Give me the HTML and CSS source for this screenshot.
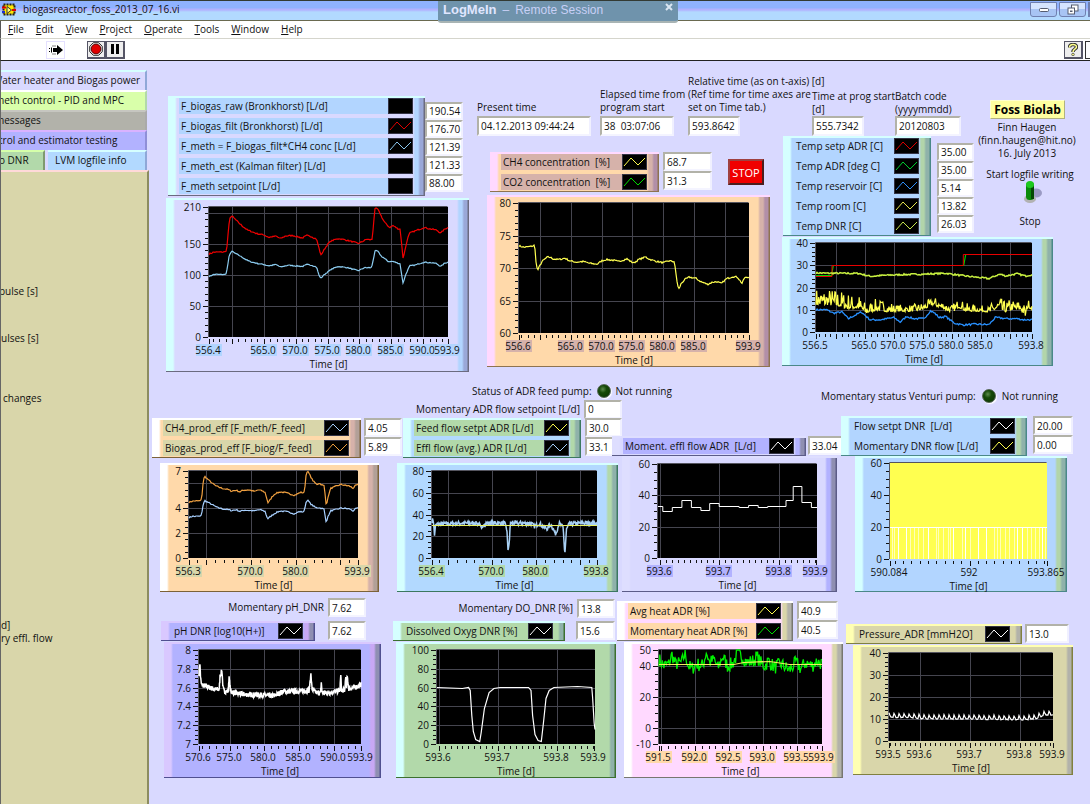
FILE: index.html
```html
<!DOCTYPE html>
<html lang="en">
<head>
<meta charset="utf-8">
<title>biogasreactor_foss_2013_07_16.vi</title>
<link rel="stylesheet" href="styles.css">
</head>
<body>
<header class="titlebar">
  <svg class="app-icon" viewBox="0 0 14 14" aria-hidden="true"><rect x="1.500" y="1.500" width="11" height="10" fill="#ffe800" stroke="#222" stroke-width="2" stroke-dasharray="2 1"/><path d="M5 3.500l4.500 3.500-4.500 3.500z" fill="#ffff80" stroke="#333"/><path d="M0 4.500h4" stroke="#e00000" stroke-width="2"/><path d="M0 9h3" stroke="#2030d0" stroke-width="2"/><path d="M10 7h4" stroke="#e00000" stroke-width="2"/></svg>
  <span class="title">biogasreactor_foss_2013_07_16.vi</span>
  <div class="win-buttons">
    <button class="win-btn" aria-label="Minimize"><svg width="12" height="8" viewBox="0 0 12 8"><rect x="1.500" y="2.500" width="9" height="3" rx="1" fill="#fff" stroke="#555c70"/></svg></button>
    <button class="win-btn" aria-label="Restore"><svg width="12" height="11" viewBox="0 0 12 11"><rect x="4.500" y="1" width="6.500" height="6" fill="#fff" stroke="#555c70"/><rect x="1" y="4" width="6.500" height="6" fill="#fff" stroke="#555c70"/><rect x="3" y="6.500" width="2.500" height="1.500" fill="#555c70"/></svg></button>
    <button class="win-btn win-close" aria-label="Close"></button>
  </div>
  <div class="remote"><b>LogMeIn</b><span>–</span><span>Remote Session</span><button class="remote-close" aria-label="Close session bar"><svg width="8" height="8" viewBox="0 0 8 8"><path d="M1 1l6 6M7 1l-6 6" stroke="#d9e6f2" stroke-width="2"/></svg></button></div>
</header>
<nav class="menubar">
  <button><u>F</u>ile</button><button><u>E</u>dit</button><button><u>V</u>iew</button><button><u>P</u>roject</button><button><u>O</u>perate</button><button><u>T</u>ools</button><button><u>W</u>indow</button><button><u>H</u>elp</button>
</nav>
<div class="toolbar">
  <button class="tool tool-run" aria-label="Run"><svg width="14" height="12" viewBox="0 0 14 12"><path d="M4 4h4V1l6 5-6 5V8H4z" fill="#000"/><path d="M.5 4v1M.5 7v1M2.500 3.500v5" stroke="#000"/><path d="M3.500 2h3M3.500 10h3" stroke="#000" stroke-dasharray="1 1"/></svg></button>
  <button class="tool" aria-label="Abort"><svg width="14" height="14" viewBox="0 0 14 14"><path d="M4.300.7h5.400l3.600 3.600v5.400l-3.600 3.600H4.300L.7 9.700V4.300z" fill="#ddd" stroke="#333"/><circle cx="7" cy="7" r="4.800" fill="#e00000" stroke="#600"/></svg></button>
  <button class="tool" aria-label="Pause"><svg width="10" height="10" viewBox="0 0 10 10"><path d="M1 0h3v10H1zM6 0h3v10H6z" fill="#000"/></svg></button>
  <button class="tool tool-help" aria-label="Context help"><svg width="10" height="13" viewBox="0 0 10 13"><path d="M1.500 4.500C1.500 .5 8.500 .5 8.500 4 8.500 6 5 6 5 9" fill="none" stroke="#333" stroke-width="3.500"/><path d="M1.500 4.500C1.500 .5 8.500 .5 8.500 4 8.500 6 5 6 5 9" fill="none" stroke="#ffff8c" stroke-width="1.500"/><circle cx="5" cy="11.500" r="1.300" fill="#ffff8c" stroke="#333" stroke-width=".7"/></svg></button>
  <span class="vi-edge"></span>
</div>
<div class="workspace">
  <aside class="sidebar">
    <button class="tab tab-lavender"><span class="cut-8">Water heater and Biogas power</span></button>
    <button class="tab tab-lime"><span class="cut-6">meth control - PID and MPC</span></button>
    <button class="tab tab-gray"><span class="cut-6">messages</span></button>
    <button class="tab tab-violet"><span class="cut-2">trol and estimator testing</span></button>
    <div class="tab-pair">
      <button class="tab tab-green"><span class="cut-2">o DNR</span></button>
      <button class="tab tab-blue">LVM logfile info</button>
    </div>
    <div class="tab-page">
      <p class="note note-a"><span class="cut-2">pulse [s]</span></p>
      <p class="note note-b">ulses [s]</p>
      <p class="note note-c">changes</p>
      <p class="note note-d">d]</p>
      <p class="note note-e">ry effl. flow</p>
    </div>
  </aside>
  <main class="panel">
    <section class="top-grid">
      <div class="gas">
        <div class="readout">
          <ul class="legend sky legend-gas">
            <li>F_biogas_raw (Bronkhorst) [L/d]<i class="swatch"></i></li>
            <li>F_biogas_filt (Bronkhorst) [L/d]<i class="swatch" data-color="#e00000"></i></li>
            <li>F_meth = F_biogas_filt*CH4 conc [L/d]<i class="swatch" data-color="#8cc8f0"></i></li>
            <li>F_meth_est (Kalman filter) [L/d]<i class="swatch"></i></li>
            <li>F_meth setpoint [L/d]<i class="swatch"></i></li>
          </ul>
          <div class="values values-gas">
            <input readonly aria-label="F_biogas_raw" value="190.54"><input readonly aria-label="F_biogas_filt" value="176.70"><input readonly aria-label="F_meth" value="121.39"><input readonly aria-label="F_meth_est" value="121.33"><input readonly aria-label="F_meth setpoint" value="88.00">
          </div>
        </div>
        <div class="chart sky h-174" data-chart="gas"></div>
      </div>
      <div class="clock-strip">
        <label>Present time<input readonly class="w-114" value="04.12.2013 09:44:24"></label>
        <label>Elapsed time from<br>program start<input readonly class="w-74" value="38  03:07:06"></label>
        <label>Relative time (as on t-axis) [d]<br>(Ref time for time axes are<br>set on Time tab.)<input readonly class="w-52" value="593.8642"></label>
        <label class="tight">Time at prog start<br>[d]<input readonly class="w-52" value="555.7342"></label>
        <label class="tight">Batch code<br>(yyyymmdd)<input readonly class="w-66" value="20120803"></label>
      </div>
      <div class="about">
        <strong>Foss Biolab</strong>
        <p>Finn Haugen<br>(finn.haugen@hit.no)<br>16. July 2013</p>
        <button class="toggle" aria-pressed="true">Start logfile writing
          <svg width="24" height="24" viewBox="0 0 24 24"><ellipse cx="18" cy="13" rx="6" ry="4.500" fill="#9a9ac4"/><ellipse cx="12" cy="19" rx="6" ry="4" fill="#b2b2b2"/><rect x="8" y="2" width="8" height="18" rx="3.500" fill="#0a8a0a"/><rect x="13" y="4" width="3" height="15" fill="#034a03"/><ellipse cx="12" cy="4.500" rx="4" ry="3.500" fill="#1dc81d"/></svg>
          <span>Stop</span></button>
      </div>
      <div class="conc">
        <div class="readout readout-conc">
          <ul class="legend rose legend-conc">
            <li>CH4 concentration&nbsp; [%]<i class="swatch" data-color="#ffff50"></i></li>
            <li>CO2 concentration&nbsp; [%]<i class="swatch" data-color="#00e000"></i></li>
          </ul>
          <div class="values values-conc"><input readonly aria-label="CH4 concentration" value="68.7"><input readonly aria-label="CO2 concentration" value="31.3"></div>
          <button class="stop">STOP</button>
        </div>
        <div class="chart rose h-172" data-chart="conc"></div>
      </div>
      <div class="readout readout-temp">
        <ul class="legend aqua legend-temp">
          <li>Temp setp ADR [C]<i class="swatch" data-color="#e00000"></i></li>
          <li>Temp ADR [deg C]<i class="swatch" data-color="#00d030"></i></li>
          <li>Temp reservoir [C]<i class="swatch" data-color="#3090ff"></i></li>
          <li>Temp room [C]<i class="swatch" data-color="#e8e850"></i></li>
          <li>Temp DNR [C]<i class="swatch" data-color="#c8e850"></i></li>
        </ul>
        <div class="values values-temp">
          <input readonly aria-label="Temp setp ADR" value="35.00"><input readonly aria-label="Temp ADR" value="35.00"><input readonly aria-label="Temp reservoir" value="5.14"><input readonly aria-label="Temp room" value="13.82"><input readonly aria-label="Temp DNR" value="26.03">
        </div>
      </div>
      <div class="chart aqua h-129 chart-temp" data-chart="temp"></div>
    </section>

    <section class="quad quad-flow">
      <div class="cell cell-eff">
        <div class="readout">
          <ul class="legend peach legend-eff">
            <li>CH4_prod_eff [F_meth/F_feed]<i class="swatch" data-color="#a8d0ff"></i></li>
            <li>Biogas_prod_eff [F_biog/F_feed]<i class="swatch" data-color="#f0a040"></i></li>
          </ul>
          <div class="values values-eff"><input readonly aria-label="CH4_prod_eff" value="4.05"><input readonly aria-label="Biogas_prod_eff" value="5.89"></div>
        </div>
        <div class="chart peach h-129" data-chart="eff"></div>
      </div>
      <div class="cell cell-feed">
        <p class="status">Status of ADR feed pump:<i class="led"></i>Not running</p>
        <label class="single single-feed">Momentary ADR flow setpoint [L/d]<input readonly value="0"></label>
        <div class="readout">
          <ul class="legend mint legend-feed">
            <li>Feed flow setpt ADR [L/d]<i class="swatch" data-color="#ffff50"></i></li>
            <li>Effl flow (avg.) ADR [L/d]<i class="swatch" data-color="#a8d0ff"></i></li>
          </ul>
          <div class="values values-feed"><input readonly aria-label="Feed flow setpoint" value="30.0"><input readonly aria-label="Effluent flow" value="33.1"></div>
        </div>
        <div class="chart mint h-129" data-chart="feed"></div>
      </div>
      <div class="cell cell-effl">
        <div class="readout">
          <ul class="legend lilac legend-effl"><li>Moment. effl flow ADR&nbsp; [L/d]<i class="swatch" data-color="#ffffff"></i></li></ul>
          <div class="values values-effl"><input readonly aria-label="Momentary effluent flow" value="33.04"></div>
        </div>
        <div class="chart lilac h-136" data-chart="effl"></div>
      </div>
      <div class="cell cell-dnr">
        <p class="status status-dnr">Momentary status Venturi pump:<i class="led"></i>Not running</p>
        <div class="readout">
          <ul class="legend aqua legend-dnr">
            <li>Flow setpt DNR&nbsp; [L/d]<i class="swatch" data-color="#ffffff"></i></li>
            <li>Momentary DNR flow [L/d]<i class="swatch" data-color="#ffff50"></i></li>
          </ul>
          <div class="values values-dnr"><input readonly aria-label="Flow setpoint DNR" value="20.00"><input readonly aria-label="Momentary DNR flow" value="0.00"></div>
        </div>
        <div class="chart aqua h-136" data-chart="dnr"></div>
      </div>
    </section>

    <section class="quad quad-state">
      <div class="cell cell-ph">
        <label class="single single-ph">Momentary pH_DNR<input readonly value="7.62"></label>
        <div class="readout">
          <ul class="legend violet legend-ph"><li>pH DNR [log10(H+)]<i class="swatch" data-color="#ffffff"></i></li></ul>
          <div class="values values-ph"><input readonly aria-label="pH DNR" value="7.62"></div>
        </div>
        <div class="chart violet h-136" data-chart="ph"></div>
      </div>
      <div class="cell cell-do">
        <label class="single single-do">Momentary DO_DNR [%]<input readonly value="13.8"></label>
        <div class="readout">
          <ul class="legend green legend-do"><li>Dissolved Oxyg DNR [%]<i class="swatch" data-color="#ffffff"></i></li></ul>
          <div class="values values-do"><input readonly aria-label="Dissolved oxygen DNR" value="15.6"></div>
        </div>
        <div class="chart green h-136" data-chart="oxy"></div>
      </div>
      <div class="cell cell-heat">
        <div class="readout">
          <ul class="legend pink legend-heat">
            <li>Avg heat ADR [%]<i class="swatch" data-color="#ffff50"></i></li>
            <li>Momentary heat ADR [%]<i class="swatch" data-color="#00e000"></i></li>
          </ul>
          <div class="values values-heat"><input readonly aria-label="Average heat" value="40.9"><input readonly aria-label="Momentary heat" value="40.5"></div>
        </div>
        <div class="chart pink h-136" data-chart="heat"></div>
      </div>
      <div class="cell cell-press">
        <div class="readout">
          <ul class="legend olive legend-press"><li>Pressure_ADR [mmH2O]<i class="swatch" data-color="#ffffff"></i></li></ul>
          <div class="values values-press"><input readonly aria-label="Pressure ADR" value="13.0"></div>
        </div>
        <div class="chart olive h-130" data-chart="press"></div>
      </div>
    </section>
  </main>
</div>
<script src="charts.js"></script>
</body>
</html>
```
FILE: styles.css
```css
* { box-sizing: border-box; }
body {
  margin: 0;
  min-height: 100vh;
  display: flex;
  flex-direction: column;
  background: #d9d9ff;
  color: #111;
  font: 10px/13px "Open Sans", "Noto Sans", sans-serif;
  overflow-x: hidden;
}
button, input { font: inherit; color: inherit; }
button { border: 0; padding: 0; background: none; }
p, ul { margin: 0; padding: 0; }
ul { list-style: none; }

/* window chrome */
.titlebar {
  position: relative;
  display: flex;
  align-items: center;
  height: 21px;
  padding: 0 0 2px 2px;
  border-top: 1px solid #333a33;
  border-bottom: 1px solid #6a6a50;
  background: linear-gradient(#8fb2ff 0 7px, #b2b2ff 8px 9px, #b2d9ff 11px);
}
.app-icon { width: 14px; height: 14px; }
.title { margin-left: 7px; font-size: 10px; }
.win-buttons { display: flex; gap: 2px; margin-left: auto; align-self: flex-start; }
.win-btn {
  display: flex; align-items: center; justify-content: center;
  width: 27px; height: 15px; margin-top: 1px;
  border: 1px solid #7080b0; border-radius: 0 0 3px 3px;
  background: linear-gradient(#d5e4ff 0 50%, #a8c4f4 50%);
}
.win-close { width: 2px; background: #a03030; border-radius: 0; }
.remote {
  position: absolute; left: 50%; top: 0; transform: translateX(-107px);
  display: flex; align-items: center; gap: 6px;
  width: 240px; height: 22px; padding: 0 5px 3px;
  border-radius: 0 0 3px 3px; border-bottom: 2px solid #a8b4b4;
  background: #6f93ac; color: #c8d0f6;
  font: 12px/14px "Liberation Sans", sans-serif;
}
.remote b { font-size: 13px; color: #e0e6ff; }
.remote-close { display: flex; margin-left: auto; align-self: flex-start; padding-top: 2px; }
.menubar { display: flex; gap: 12px; height: 18px; padding: 0 0 1px 7px; background: #fff; border-bottom: 1px solid #d5d5cc; border-left: 1px solid #555; }
.toolbar { display: flex; align-items: center; height: 22px; padding-left: 45px; background: #fff; border-bottom: 1px solid #222; border-left: 1px solid #555; }
.tool { display: flex; align-items: center; justify-content: center; width: 19px; height: 18px; border: 1px solid #556; border-right-width: 2px; border-bottom-width: 2px; background: #eee; }
.tool-run { margin-right: 22px; border: 1px solid #e4e0ff; background: #fff; }
.tool-help { margin-left: auto; }
.vi-edge { width: 5px; height: 18px; margin-left: 2px; border: 1px solid #333; border-right: 0; }

/* clipped tab control */
.workspace { display: flex; flex: 1; }
.sidebar { display: flex; flex-direction: column; flex: 0 0 149px; padding-top: 9px; overflow: hidden; border-left: 1px solid #666; white-space: nowrap; }
.tab { height: 20px; margin-right: 2px; padding-bottom: 1px; text-align: left; overflow: hidden; border-top: 2px solid #d5ffff; border-right: 2px solid #8fa8d8; }
.tab span { display: block; }
.cut-8 { margin-left: -8px; }
.cut-6 { margin-left: -6px; }
.cut-2 { margin-left: -2px; }
.tab-lavender { background: #d9d9ff; }
.tab-lime { background: #d9ffaa; border-color: #fff #b2d9aa #fff #fff; }
.tab-gray { background: #b2b2aa; border-color: #c6c6c0 #aaa #aaa #aaa; }
.tab-violet { background: #b2b2ff; border-color: #d9b2ff #8f8fd8 #8f8fd8 #8f8fd8; }
.tab-pair { display: flex; gap: 3px; height: 20px; }
.tab-pair .tab { flex: 0 0 44px; margin-right: 0; }
.tab-green { background: #b2d9aa; border-color: #d5ffaa #7f9a70 #b2d9aa #b2d9aa; }
.tab-pair .tab-blue { flex: 0 0 99px; padding-left: 7px; background: #b2d9ff; }
.tab-page { flex: 1; padding-top: 113px; background: #d9d6aa; border-top: 2px solid #ffd9d9; border-right: 2px solid #8c8c60; }
.note { height: 13px; }
.note-b { margin-top: 34px; }
.note-c { margin: 47px 0 0 2px; }
.note-d { margin-top: 214px; }

/* front panel */
.panel { flex: 1; min-width: 0; white-space: nowrap; }
.top-grid {
  display: grid;
  grid-template-columns: 311fr 305fr 195fr 113fr;
  grid-template-rows: 75px 101px 136px;
  padding-left: 17px;
}
.gas { grid-row: 1 / 4; padding: 35px 8px 0 0; min-width: 0; }
.clock-strip { grid-column: 2 / 4; display: grid; grid-template-columns: 123fr 88fr 124fr 83fr 82fr; align-items: end; min-width: 0; }
.clock-strip label { min-width: 0; }
.clock-strip input { display: block; height: 20px; margin-top: 2px; white-space: pre; }
.clock-strip .tight input { margin-top: 0; }
.w-114 { width: 114px; }
.w-74 { width: 74px; }
.w-52 { width: 52px; }
.w-66 { width: 66px; }
.about { grid-column: 4; grid-row: 1 / 3; display: flex; flex-direction: column; align-items: center; padding: 39px 13px 0 0; min-width: 0; text-align: center; }
.about strong { padding: 0 0 0 1px; width: 75px; font-size: 12px; line-height: 17px; color: #000; background: #ffffa0; border: 1px solid #ffffd0; border-right-color: #b2b280; border-bottom-color: #b2b280; }
.about p { margin-top: 2px; }
.toggle { display: flex; flex-direction: column; align-items: center; margin: 8px 0 0 6px; }
.toggle svg { margin-top: -1px; }
.toggle span { margin-top: 11px; }
.conc { grid-column: 2; grid-row: 2 / 4; padding: 16px 12px 0 10px; min-width: 0; }
.chart-temp { grid-column: 3 / 5; margin-right: 37px; }
.stop { width: 36px; height: 26px; margin: 7px 0 0 16px; font-size: 11px; color: #fff; background: #f00000; border: 2px outset #a04040; }

/* numeric indicators */
input {
  width: 100%; min-width: 0; height: 19px; padding: 0 0 0 2px;
  background: #fff; outline: 0; border-radius: 0;
  border: 2px solid #b2b2a8; border-right: 2px solid #f0f0ff; border-bottom: 2px solid #f4f4ff;
}
.readout { display: flex; align-items: flex-start; }
.values { display: flex; flex-direction: column; flex: none; }
.values-gas { width: 38px; padding-top: 6px; }
.values-gas input { height: 18px; }
.values-conc { width: 49px; margin-left: 4px; }
.values-temp { width: 37px; margin-left: 6px; padding-top: 7px; }
.values-temp input { height: 18px; }
.values-eff, .values-effl, .values-ph { width: 38px; }
.values-eff { margin-left: 3px; }
.values-feed { width: 37px; margin-left: 4px; }
.values-effl { margin-left: 2px; }
.values-dnr { width: 40px; margin-left: 6px; }
.values-ph { margin-left: 13px; }
.values-do { width: 39px; margin-left: 11px; }
.values-heat { width: 41px; margin-left: 4px; }
.values-press { width: 44px; margin-left: 3px; }

/* bevelled plates shared by legends and charts */
.legend, .chart {
  border-top: 2px solid var(--lite);
  border-bottom: 1px solid var(--dark);
  background: linear-gradient(to right, var(--lite) 7px, var(--base) 9px, var(--base) calc(100% - 12px), var(--mid) calc(100% - 10px), var(--mid) calc(100% - 7px), var(--deep) calc(100% - 5px), var(--deep) calc(100% - 2px), var(--dark) calc(100% - 1px));
}
.sky { --lite: #d5ffff; --base: #d9d9ff; --mid: #b2d5ff; --deep: #9aa8d8; --dark: #6b6b80; --chip: #b2d5ff; }
.rose { --lite: #ffd9ff; --base: #ffd9aa; --mid: #d6b2aa; --deep: #b28fa8; --dark: #8e7350; --chip: #d6b2aa; }
.aqua { --lite: #d5ffff; --base: #b2d5ff; --mid: #b2d5aa; --deep: #8fb2aa; --dark: #4a8888; --chip: #b2d5ff; }
.peach { --lite: #ffffff; --base: #ffd9aa; --mid: #d6b2aa; --deep: #b2a098; --dark: #7c6238; --chip: #d9d6aa; }
.mint { --lite: #d5ffff; --base: #b2d9ff; --mid: #b2d9aa; --deep: #8fb2aa; --dark: #3c7860; --chip: #b2d9aa; }
.lilac { --lite: #dedeff; --base: #d9d9ff; --mid: #b2b2ff; --deep: #8f8fb2; --dark: #5c5c88; --chip: #b2b2ff; }
.violet { --lite: #d9c8ff; --base: #b2b2ff; --mid: #c8a8f4; --deep: #8f8fb2; --dark: #505090; --chip: #b2b2ff; }
.green { --lite: #d5ffff; --base: #b2d9aa; --mid: #b2d9aa; --deep: #8fb2aa; --dark: #3c7030; --chip: #b2d9aa; }
.pink { --lite: #ffffff; --base: #ffd9ff; --mid: #d9d6aa; --deep: #b2b2aa; --dark: #777770; --chip: #ffd9aa; }
.olive { --lite: #ffffb2; --base: #d9d6aa; --mid: #d9d6aa; --deep: #b2b2aa; --dark: #808040; --chip: #d9d6aa; }
.legend { display: flex; flex-direction: column; flex: none; gap: 4px; padding: 0 12px 1px 11px; line-height: 12px; }
.legend li { display: flex; align-items: center; justify-content: space-between; height: 16px; padding: 0 0 0 2px; background: var(--chip); }
.swatch { flex: none; width: 25px; height: 16px; background: #000; border: 1px solid #334; }
.swatch svg { display: block; }
.legend-gas { width: 257px; margin-left: 2px; }
.legend-conc { width: 169px; margin-left: 3px; }
.legend-temp { width: 148px; margin-left: 1px; }
.legend-eff { width: 209px; }
.legend-feed { width: 178px; margin-left: 10px; }
.legend-effl { width: 194px; }
.legend-dnr { width: 186px; margin-left: -2px; }
.legend-ph { width: 154px; margin-left: 9px; }
.legend-do { width: 172px; }
.legend-heat { width: 176px; margin-left: 5px; }
.legend-press { width: 176px; margin-left: 3px; }

.chart svg { display: block; width: 100%; height: 100%; margin-top: -2px; overflow: visible; }
.h-174 { height: 174px; }
.h-172 { height: 172px; }
.h-129 { height: 129px; }
.h-130 { height: 130px; }
.h-136 { height: 136px; }
.gas .chart { margin-top: 2px; }
.conc .chart { margin-top: 3px; }

/* lower chart rows */
.quad { display: grid; grid-template-columns: 241fr 219fr 231fr 247fr; align-items: end; padding-left: 3px; }
.quad-flow { height: 219px; }
.quad-state { height: 186px; }
.cell { display: flex; flex-direction: column; min-width: 0; }
.cell-eff .chart { margin: 5px 14px 0 8px; }
.cell-feed .chart { margin: 5px -6px 0 4px; }
.cell-effl .chart { margin: 0 6px 0 10px; }
.cell-dnr .chart { margin: 0 23px 0 12px; }
.cell-ph .chart { margin: 1px 12px 0 12px; }
.cell-do .chart { margin: 1px -4px 0 3px; }
.cell-heat .chart { margin: 1px 0 0 12px; }
.cell-press .chart { margin: 1px 17px 3px 10px; }
.status { display: flex; align-items: center; gap: 5px; height: 18px; margin-left: 79px; }
.status-dnr { justify-content: flex-end; margin: 0 32px 11px 0; gap: 6px; }
.led { flex: none; width: 14px; height: 14px; border-radius: 50%; border: 1px solid #556655; background: radial-gradient(circle at 40% 35%, #5c8a4c 0, #164a08 35%, #0a3000); box-shadow: 1px 1px 1px #fff; }
.single { display: flex; align-items: center; justify-content: flex-end; gap: 4px; }
.single input { flex: none; width: 38px; }
.single-feed { width: 229px; height: 18px; }
.single-ph { width: 214px; height: 23px; padding-bottom: 4px; }
.single-do { width: 222px; height: 23px; padding-bottom: 2px; }
```
FILE: charts.js
```js
// Strip-chart renderer for the front panel. Series x values are percent of the time span.
const gasRaw = [[0,134],[2,137],[7,137.5],[7.6,147],[8,168],[8.6,190],[9.4,196],[10.5,192],[12,186],[14,179],[16,173],[18,170],[20,167],[23,165],[25,161],[28,163],[30,159],[32,163],[35,164],[39,160],[41,164],[43,162],[45,158],[46,144],[46.8,132],[48,140],[49.5,149],[51,155],[54,159],[57,157],[60,154],[62.5,151],[65,156],[66,158],[67.5,157],[68.3,158],[69,190],[69.5,208],[70.5,207],[71.5,200],[73,188],[74,183],[75.5,177],[77,180],[79,175],[80,174],[80.6,150],[81.2,127],[82,140],[83,158],[84,168],[86,171],[88,174],[90,177],[92,175],[95,173],[97,168],[98.5,174],[100,177]];
const gasMeth = [[0,98],[2,101],[7,101],[7.6,110],[8.4,130],[9.4,139],[10.5,136],[13,131],[15,126],[17,122],[20,119],[23,117],[25,115],[28,117],[30,113],[33,116],[39,114],[41,117],[43,116],[45,113],[46,100],[46.8,95],[48,100],[51,109],[54,114],[58,112],[62.5,107],[65,112],[68,112],[69,130],[69.5,139],[70.5,139],[72,131],[75,122],[77,122],[80,118],[80.6,100],[81.2,87],[82.5,103],[84,115],[86,116],[90,121],[95,119],[97,114],[98.5,119],[100,121]];
const scale = (pts, k) => pts.map(p => [p[0], p[1] / k]);
const steps = list => list.flatMap(([a, b, v]) => [[a, v], [b, v]]);
const range = (a, b, s) => { const r = []; for (let v = a; v <= b + s / 1000; v += s) r.push(v); return r; };

const charts = {
  gas: { m: [43, 9, 21, 35], x: [556.4, 593.9], y: [0, 210], yl: [0, 50, 100, 150, 210], yg: [50, 100, 150, 200], ym: 10,
    xl: [556.4, 565, 570, 575, 580, 585, 590, 593.9], xg: range(560, 590, 5), xm: 1, chip: 1,
    s: [{ c: '#f00000', p: gasRaw, n: 239, a: 2 }, { c: '#8cccf0', p: gasMeth, n: 239, a: 1.5 }] },
  conc: { m: [32, 8, 21, 34], x: [556.6, 593.9], y: [60, 80], yl: [60, 65, 70, 75, 80], yg: [65, 70, 75], ym: 1,
    xl: [556.6, 565, 570, 575, 580, 585, 593.9], xg: range(560, 590, 5), xm: 1, chip: 1,
    s: [{ c: '#ffff50', n: 230, a: .25, p: [[0,73.4],[2,73.2],[5,73.3],[6.8,73.5],[7.4,71],[8,69.6],[9,70.3],[10,71],[12,71.6],[13,71.7],[15,71.4],[17,71.3],[20,71.5],[22,71.1],[25,70.9],[28,71],[31,70.7],[34,70.6],[36,71.1],[38,71.3],[41,71.2],[43,71],[47,71.4],[49,70.9],[50,70.8],[52,71.3],[55,71.7],[57,71.3],[60,71],[63,70.8],[65,71.1],[67.5,71],[68.3,69],[69,67.2],[69.6,66.8],[70.5,67.6],[72,68.2],[74,68.6],[77,68.4],[79,67.9],[82,67.5],[84,67.8],[86,67.9],[88,67.6],[90,68.3],[93,68.7],[95,68.6],[97,67.6],[98,68.5],[100,68.6]] }] },
  temp: { m: [34, 6, 21, 34], x: [556.5, 593.8], y: [0, 40], yl: [0, 10, 20, 30, 40], yg: [10, 20, 30], ym: 2,
    xl: [556.5, 565, 570, 575, 580, 585, 593.8], xg: range(560, 590, 5), xm: 1,
    s: [{ c: '#00d000', p: [[0,25.2],[7.2,25.2],[8,30],[68.4,30],[69.3,35],[71,34.8],[100,34.8]] },
      { c: '#e80000', w: 1, p: [[0,25],[7.4,25],[7.4,30],[68.2,30],[68.2,34.7],[100,34.7]] },
      { c: '#c8f040', w: 1.5, n: 216, a: .7, p: [[0,26.5],[20,26.3],[25,25],[32,25.5],[40,25.8],[50,26],[60,26.4],[68,25.3],[80,24],[85,26],[88,25.2],[93,26.2],[97,25.2],[100,25.8]] },
      { c: '#ffff50', n: 320, sp: 1, p: [[0,14,6],[5,14,6],[10,13.500,6],[15,12,5],[20,12,4],[23,9.500,4],[28,11,4],[35,10,2.5],[45,10,2.5],[50,11,2.5],[54,13,3],[60,11,3],[63,9.500,3],[66,12,3],[70,10,2.5],[76,10,2],[80,9.500,3],[85,12,4],[87,10,4],[90,11,3.500],[95,11,4],[97,8,2],[98,12,3],[100,11,4]] },
      { c: '#2890ff', n: 200, a: .8, w: 1.3, p: [[0,10],[5,10],[8,8.500],[12,9],[15,6],[18,7.500],[21,9],[25,5.500],[30,5.500],[36,6.500],[39,4.500],[42,7],[45,6],[50,6],[53,9.500],[55,8.500],[57,6.500],[60,7],[64,4],[68,3.200],[74,3.500],[80,3.300],[83,6.500],[88,6],[93,6],[96,5.500],[100,5.500]] }] },
  eff: { m: [29, 8, 21, 34], x: [556.3, 593.9], y: [0, 7], yl: [0, 2, 4, 7], yg: [2, 4, 6], ym: .5,
    xl: [556.3, 570, 580, 593.9], xg: [560, 570, 580, 590], xm: 2, chip: 1,
    s: [{ c: '#f0a040', p: scale(gasRaw, 29.9), n: 169, a: .1 }, { c: '#a8d0ff', p: scale(gasMeth, 30.1), n: 169, a: .1 }] },
  feed: { m: [35, 8, 21, 34], x: [556.4, 593.8], y: [0, 80], yl: [0, 20, 40, 60, 80], yg: [20, 40, 60], ym: 5,
    xl: [556.4, 570, 580, 593.8], xg: [560, 570, 580, 590], xm: 2, chip: 1,
    s: [{ c: '#a8d0f4', w: 1.5, n: 330, a: 4, p: [[0,34],[.8,36],[1.500,20],[2,29],[3,31],[15,32],[28,32],[29,30],[30,26],[31,31],[34,32],[44,32],[45.500,25],[46,5],[47,18],[47.500,32],[57,32],[60,32],[62,29],[65,32],[67,29],[70,27],[72,31],[75,22],[77,32],[79.500,28],[80.500,3],[81.500,26],[83,31],[90,32],[100,32]] },
      { c: '#e8f060', p: [[0,30],[100,30]] }] },
  effl: { m: [36, 8, 20, 34], x: [593.597, 593.864], y: [0, 60], yl: [0, 20, 40, 60], yg: [20, 40], ym: 5,
    xl: [593.6, 593.7, 593.8, [593.863, '593.9']], xg: [593.6, 593.7, 593.8], xm: .01, chip: 1,
    s: [{ c: '#fff', w: 1, p: steps([[0,3,33],[3,9,29.5],[9,15,32],[15,21,37],[21,27,32.5],[27,32.5,30.5],[32.5,38.5,35],[38.5,51,32.7],[51,57,32.2],[57,63,33.2],[63,69,32.2],[69,80.5,32.8],[80.5,85,37],[85,90.5,45.5],[90.5,96.5,35.5],[96.5,100,32.5]]) }] },
  dnr: { m: [35, 7, 20, 33], x: [590.084, 593.865], y: [0, 60], yl: [0, 20, 40, 60], yg: [], ym: 5, fill: '#ffff50',
    xl: [[590.084, '590.084'], [592, '592'], [593.865, '593.865']], xg: [], xm: .2,
    s: [{ c: '#fff', w: 1, p: [[0,20],[100,20]] }],
    bars: [[1,1],[2.5,1],[5,2],[10,2],[13,1],[15.5,1],[18,1],[21,1],[24,2],[29,1],[30.5,1],[34,1],[37,1],[38.5,1],[40,2],[46,1],[48,2],[51,1],[56,2],[61,2],[66,1],[68,1],[70,1],[73,1],[76,1],[79,1],[81,2],[84,2],[87,1],[90,1],[92.5,1],[95,1],[97,2],[99,1]] },
  ph: { m: [35, 8, 20, 34], x: [570.6, 593.9], y: [7, 8], yl: [7, 7.2, 7.4, 7.6, 7.8, 8], yg: [7.2, 7.4, 7.6, 7.8], ym: .05,
    xl: [570.6, 575, 580, 585, 590, 593.9], xg: [575, 580, 585, 590], xm: 1,
    s: [{ c: '#fff', w: 1.5, n: 640, a: .055, p: [[0,7.75],[.5,7.87],[1,7.7],[1.500,7.63],[5,7.61],[10,7.58],[12.500,7.58],[13,7.73],[14.200,7.78],[14.800,7.6],[15.500,7.56],[18,7.56],[18.500,7.71],[19,7.64],[19.500,7.56],[25,7.53],[40,7.52],[46,7.51],[52,7.56],[60,7.56],[68,7.57],[69,7.75],[69.800,7.58],[72,7.55],[75,7.54],[75.500,7.66],[76,7.54],[82,7.55],[87,7.57],[87.500,7.73],[88,7.57],[90,7.57],[90.500,7.73],[91,7.58],[91.500,7.72],[92.500,7.59],[96,7.6],[100,7.63]] }] },
  oxy: { m: [41, 8, 21, 34], x: [593.597, 593.864], y: [0, 100], yl: [0, 20, 40, 60, 80, 100], yg: [20, 40, 60, 80], ym: 5,
    xl: [593.6, 593.7, 593.8, [593.863, '593.9']], xg: [593.6, 593.7, 593.8], xm: .01,
    s: [{ c: '#fff', w: 1.2, p: [[0,60],[16,59.500],[20,60],[21,57],[22,30],[23,13],[24.500,5],[27,3],[28,12],[30,38],[33,55],[36,59.500],[40,60],[58,60],[59.500,57],[60.500,30],[62,10],[64,4],[66,3],[67.500,25],[69,48],[71,57],[74,60],[89,61],[98,60],[98.500,50],[99.500,22],[100,15]] }] },
  heat: { m: [35, 8, 21, 34], x: [591.47, 593.87], y: [-10, 50], yl: [-10, 0, 20, 40, 50], yg: [0, 20, 40], ym: 5,
    xl: [[591.47, '591.5'], 592, 592.5, 593, 593.5, [593.87, '593.9']], xg: [591.5, 592, 592.5, 593, 593.5], xm: .1, chip: 1,
    s: [{ c: '#00f000', w: 1.3, n: 200, a: 9, p: [[0,44],[3,40],[6,41],[8,47],[10,41],[14,42],[16,48],[18,40],[20,38],[23,41],[27,40],[29,49],[31,42],[34,44],[36,38],[39,46],[42,40],[45,41],[48,47],[51,46],[54,42],[58,43],[60,46],[63,41],[65,40],[67,43],[71,39],[75,41],[80,37],[84,42],[87,38],[90,42],[94,40],[97,43],[100,41]] },
      { c: '#f4f060', p: [[0,40.800],[46,40.800],[52,42.200],[68,42.400],[80,41],[100,41]] }] },
  press: { m: [36, 8, 20, 34], x: [593.538, 593.865], y: [0, 40], yl: [0, 10, 20, 30, 40], yg: [10, 20, 30], ym: 2,
    xl: [[593.538, '593.5'], 593.6, 593.7, 593.8, [593.865, '593.9']], xg: [593.6, 593.7, 593.8], xm: .01,
    s: [{ c: '#fff', n: 164, saw: 1.800, w: 1.2, p: [[0,11],[16,10.800],[20,10.3],[50,10.2],[83,9.800],[90,10.500],[95,12],[100,12]] }] }
};

// Interpolates a key series and adds repeatable sensor jitter.
function resample(s) {
  let seed = 7;
  const rnd = () => (seed = (seed * 16807) % 2147483647) / 2147483647;
  const out = [];
  for (let i = 0, k = 0; i <= s.n; i++) {
    const x = i * 100 / s.n;
    while (k < s.p.length - 2 && s.p[k + 1][0] < x) k++;
    const a = s.p[k], b = s.p[k + 1], t = (x - a[0]) / ((b[0] - a[0]) || 1);
    let v = a[1] + (b[1] - a[1]) * t;
    if (s.sp) v += (Math.pow(rnd(), 2.500) * 1.300 - .3) * a[2];
    else if (s.saw) v += (i % 5 === 0 ? s.saw : i % 5 === 1 ? s.saw * .5 : 0) - rnd() * .4;
    else v += (rnd() - .5) * s.a;
    out.push([x, v]);
  }
  return out;
}

function draw(el) {
  const c = charts[el.dataset.chart], W = el.clientWidth, H = el.offsetHeight;
  const [l, t, r, b] = c.m, w = W - l - r, h = H - t - b, bot = t + h;
  const X = v => Math.round(l + (v - c.x[0]) / (c.x[1] - c.x[0]) * w);
  const Y = v => Math.round(bot - (v - c.y[0]) / (c.y[1] - c.y[0]) * h);
  let o = `<rect x="${l}" y="${t}" width="${w}" height="${h}" fill="${c.fill || '#000'}"/>`;
  let g = '';
  c.yg.forEach(v => g += `M${l} ${Y(v) + .5}h${w}`);
  c.xg.forEach(v => g += `M${X(v) + .5} ${t}v${h}`);
  o += `<path d="${g}" stroke="#45454f"/><path d="M${l - .5} ${bot}V${t - .5}h${w}" stroke="#55555f" fill="none"/>`;
  let k = '';
  range(c.y[0], c.y[1], c.ym).forEach(v => k += `M${l - 4} ${Y(v) + .5}h3`);
  c.yl.forEach(v => k += `M${l - 6} ${Y(v) + .5}h5`);
  range(Math.ceil(c.x[0] / c.xm) * c.xm, c.x[1], c.xm).forEach(v => k += `M${X(v) + .5} ${bot + 2}v3`);
  c.xg.forEach(v => k += `M${X(v) + .5} ${bot + 2}v5`);
  c.xl.forEach(v => k += `M${X(v[0] || v) + .5} ${bot + 2}v5`);
  o += `<path d="${k}" stroke="#111"/>`;
  c.yl.forEach(v => o += `<text x="${l - 8}" y="${Y(v) + 4}" text-anchor="end">${v}</text>`);
  c.xl.forEach(v => {
    const x = X(v[0] || v), s = v[1] || v.toFixed(1);
    if (c.chip) o += `<rect x="${x - 13}" y="${bot + 7}" width="26" height="12" fill="var(--chip)"/>`;
    o += `<text x="${x - 1}" y="${bot + 17}" text-anchor="middle">${s}</text>`;
  });
  o += `<text x="${l + w / 2}" y="${bot + 31}" text-anchor="middle">Time [d]</text>`;
  (c.bars || []).forEach(([x, n]) => o += `<rect x="${Math.round(l + x * w / 100)}" y="${Y(20)}" width="1" height="${bot - Y(20)}" fill="${n > 1 ? '#fff' : '#ffffb8'}"/>`);
  c.s.forEach(s => {
    // Unsampled traces snap to the pixel grid so their flat runs stay sharp.
    const py = v => { const y = Math.max(t, bot - (v - c.y[0]) / (c.y[1] - c.y[0]) * h); return s.n ? y.toFixed(1) : Math.floor(y) + .5; };
    const d = (s.n ? resample(s) : s.p).map(([x, v]) => `${(l + x * w / 100).toFixed(1)},${py(v)}`).join(' ');
    o += `<polyline points="${d}" fill="none" stroke="${s.c}" stroke-width="${s.w || 1.2}"/>`;
  });
  el.innerHTML = `<svg role="img" aria-label="${el.dataset.chart} trend" font-size="10" fill="#111">${o}</svg>`;
}

document.querySelectorAll('.swatch[data-color]').forEach(e => {
  e.innerHTML = `<svg width="23" height="14"><path d="M1 11L8 3 15 10 22 3" fill="none" stroke="${e.dataset.color}"/></svg>`;
});
const drawAll = () => document.querySelectorAll('.chart').forEach(draw);
drawAll();
addEventListener('resize', drawAll);
```
